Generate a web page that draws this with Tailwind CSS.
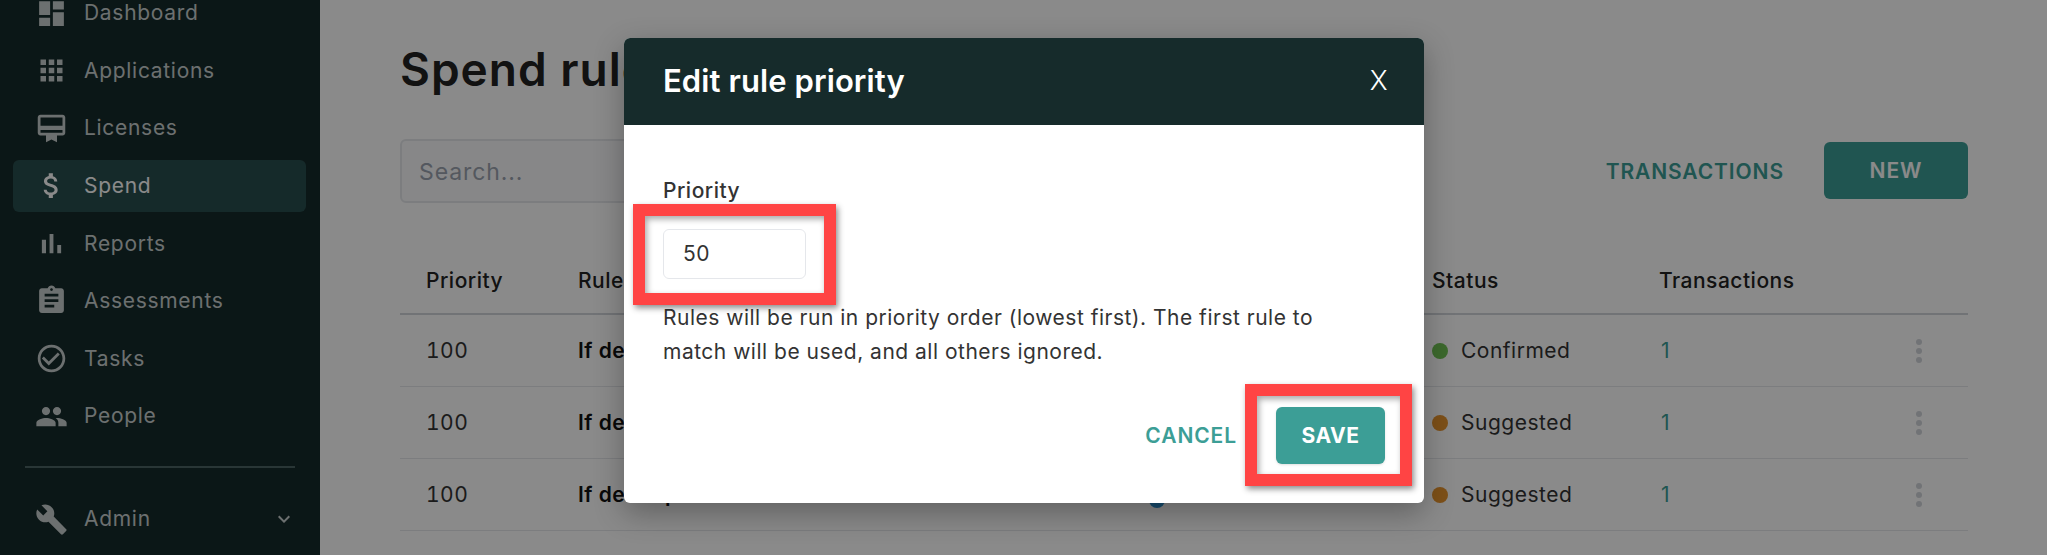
<!DOCTYPE html>
<html>
<head>
<meta charset="utf-8">
<title>Spend rules</title>
<script src="https://cdn.jsdelivr.net/npm/@tailwindcss/browser@4"></script>
</head>
<body class="relative h-[555px] overflow-hidden bg-white font-['Inter',sans-serif] text-[21px] tracking-[0.5px] text-[#333]">

  <div class="flex h-[555px]">
    <!-- Sidebar -->
    <aside class="w-[320px] shrink-0 h-[555px] overflow-hidden bg-[#162b2b] text-[#c8cfcf] tracking-[0.7px]">
      <nav class="-mt-[13px] px-[13px] flex flex-col gap-[5.6px]">
        <a class="h-[52px] w-[293px] flex items-center rounded-md pl-[22px]">
          <svg class="w-[33px] h-[33px] mr-[16px] fill-current" viewBox="0 0 24 24"><path d="M3 13h8V3H3v10zm0 8h8v-6H3v6zm10 0h8V11h-8v10zm0-18v6h8V3h-8z"/></svg>
          Dashboard
        </a>
        <a class="h-[52px] w-[293px] flex items-center rounded-md pl-[22px]">
          <svg class="w-[33px] h-[33px] mr-[16px] fill-current" viewBox="0 0 24 24"><path d="M4 8h4V4H4v4zm6 12h4v-4h-4v4zm-6 0h4v-4H4v4zm0-6h4v-4H4v4zm6 0h4v-4h-4v4zm6-10v4h4V4h-4zm-6 4h4V4h-4v4zm6 6h4v-4h-4v4zm0 6h4v-4h-4v4z"/></svg>
          Applications
        </a>
        <a class="h-[52px] w-[293px] flex items-center rounded-md pl-[22px]">
          <svg class="w-[33px] h-[33px] mr-[16px] fill-current" viewBox="0 0 24 24"><path d="M20 2H4c-1.11 0-2 .89-2 2v11c0 1.11.89 2 2 2h4v5l4-2 4 2v-5h4c1.11 0 2-.89 2-2V4c0-1.11-.89-2-2-2zm0 13H4v-2h16v2zm0-5H4V4h16v6z"/></svg>
          Licenses
        </a>
        <a class="h-[52px] w-[293px] flex items-center rounded-md pl-[22px] bg-[#284e4e] text-white">
          <svg class="w-[33px] h-[33px] mr-[16px] fill-current" viewBox="0 0 24 24"><path d="M11.8 10.9c-2.27-.59-3-1.2-3-2.15 0-1.09 1.01-1.85 2.7-1.85 1.78 0 2.44.85 2.5 2.1h2.21c-.07-1.72-1.12-3.3-3.21-3.81V3h-3v2.16c-1.94.42-3.5 1.68-3.5 3.61 0 2.31 1.91 3.46 4.7 4.13 2.5.6 3 1.48 3 2.41 0 .69-.49 1.79-2.7 1.79-2.06 0-2.87-.92-2.98-2.1h-2.2c.12 2.19 1.76 3.42 3.68 3.83V21h3v-2.15c1.95-.37 3.5-1.5 3.5-3.55 0-2.84-2.43-3.81-4.7-4.4z"/></svg>
          Spend
        </a>
        <a class="h-[52px] w-[293px] flex items-center rounded-md pl-[22px]">
          <svg class="w-[33px] h-[33px] mr-[16px] fill-current" viewBox="0 0 24 24"><path d="M5 9.2h3V19H5zM10.6 5h2.8v14h-2.8zm5.6 8H19v6h-2.8z"/></svg>
          Reports
        </a>
        <a class="h-[52px] w-[293px] flex items-center rounded-md pl-[22px]">
          <svg class="w-[33px] h-[33px] mr-[16px] fill-current" viewBox="0 0 24 24"><path d="M19 3h-4.18C14.4 1.84 13.3 1 12 1c-1.3 0-2.4.84-2.82 2H5c-1.1 0-2 .9-2 2v14c0 1.1.9 2 2 2h14c1.1 0 2-.9 2-2V5c0-1.1-.9-2-2-2zm-7 0c.55 0 1 .45 1 1s-.45 1-1 1-1-.45-1-1 .45-1 1-1zm2 14H7v-2h7v2zm3-4H7v-2h10v2zm0-4H7V7h10v2z"/></svg>
          Assessments
        </a>
        <a class="h-[52px] w-[293px] flex items-center rounded-md pl-[22px]">
          <svg class="w-[33px] h-[33px] mr-[16px] fill-current" viewBox="0 0 24 24"><path d="M16.59 7.58L10 14.17l-3.59-3.58L5 12l5 5 8-8zM12 2C6.48 2 2 6.48 2 12s4.48 10 10 10 10-4.48 10-10S17.52 2 12 2zm0 18c-4.42 0-8-3.58-8-8s3.58-8 8-8 8 3.58 8 8-3.58 8-8 8z"/></svg>
          Tasks
        </a>
        <a class="h-[52px] w-[293px] flex items-center rounded-md pl-[22px]">
          <svg class="w-[33px] h-[33px] mr-[16px] fill-current" viewBox="0 0 24 24"><path d="M16 11c1.66 0 2.99-1.34 2.99-3S17.66 5 16 5c-1.66 0-3 1.34-3 3s1.34 3 3 3zm-8 0c1.66 0 2.99-1.34 2.99-3S9.66 5 8 5C6.34 5 5 6.34 5 8s1.34 3 3 3zm0 2c-2.33 0-7 1.17-7 3.5V19h14v-2.5c0-2.33-4.67-3.5-7-3.5zm8 0c-.29 0-.62.02-.97.05 1.16.84 1.97 1.97 1.97 3.45V19h6v-2.5c0-2.33-4.67-3.5-7-3.5z"/></svg>
          People
        </a>
      </nav>
      <div class="mx-[25px] mt-[24px] h-[2px] bg-[#4c6565]"></div>
      <a class="mt-[25px] mx-[13px] h-[52px] w-[293px] flex items-center rounded-md pl-[22px]">
        <svg class="w-[33px] h-[33px] mr-[16px] fill-current" viewBox="0 0 24 24"><path d="M22.7 19l-9.1-9.1c.9-2.3.4-5-1.5-6.9-2-2-5-2.4-7.4-1.3L9 6 6 9 1.6 4.7C.4 7.1.9 10.1 2.9 12.1c1.9 1.9 4.6 2.4 6.9 1.5l9.1 9.1c.4.4 1 .4 1.4 0l2.3-2.3c.5-.4.5-1.1.1-1.4z"/></svg>
        Admin
        <svg class="ml-auto mr-[10px] w-[24px] h-[24px] fill-current" viewBox="0 0 24 24"><path d="M16.59 8.59L12 13.17 7.41 8.59 6 10l6 6 6-6z"/></svg>
      </a>
    </aside>

    <!-- Main -->
    <main class="flex-1 pl-[80px] pr-[79px]">
      <h1 class="mt-[41px] h-[56px] font-semibold text-[46px] leading-[56px] tracking-[1px] text-[#222]">Spend rules</h1>
      <div class="mt-[42px] flex items-center">
        <div class="w-[700px] h-[64px] flex items-center rounded-md border-2 border-[#e5e7eb] bg-[#f9fafb] pl-[17px] pt-[2px] text-[23px] tracking-[0.9px] text-[#9ca3af]">Search...</div>
        <a class="ml-auto pt-[2px] font-semibold tracking-[0.9px] text-[#3c9e96] mr-[40px]">TRANSACTIONS</a>
        <a class="w-[144px] h-[57px] -mt-[2px] pt-[1px] flex items-center justify-center rounded-md bg-[#3c9e96] font-semibold tracking-[0.9px] text-white">NEW</a>
      </div>
      <div class="mt-[46px] grid grid-cols-[152px_854px_227px_1fr] border-b-2 border-[#d1d5db] h-[66px] items-center font-medium pl-[26px] text-[#222]">
        <span>Priority</span><span>Rule</span><span>Status</span><span>Transactions</span>
      </div>
      <div class="grid grid-cols-[152px_854px_229px_1fr] h-[72px] items-center border-b border-[#e5e7eb] pl-[26px]">
        <span class="tabular-nums">100</span><span class="font-semibold text-[#111]">If description contains</span>
        <span class="flex items-center"><i class="w-4 h-4 rounded-full bg-[#6fc253] mr-[13px]"></i>Confirmed</span>
        <span class="flex items-center justify-between pr-[46px] text-[#3c9e96]">1
          <span class="flex flex-col gap-[3px]"><i class="w-[6px] h-[6px] rounded-full bg-[#d1d5db]"></i><i class="w-[6px] h-[6px] rounded-full bg-[#d1d5db]"></i><i class="w-[6px] h-[6px] rounded-full bg-[#d1d5db]"></i></span>
        </span>
      </div>
      <div class="grid grid-cols-[152px_854px_229px_1fr] h-[72px] items-center border-b border-[#e5e7eb] pl-[26px]">
        <span class="tabular-nums">100</span><span class="font-semibold text-[#111]">If description contains</span>
        <span class="flex items-center"><i class="w-4 h-4 rounded-full bg-[#e7942e] mr-[13px]"></i>Suggested</span>
        <span class="flex items-center justify-between pr-[46px] text-[#3c9e96]">1
          <span class="flex flex-col gap-[3px]"><i class="w-[6px] h-[6px] rounded-full bg-[#d1d5db]"></i><i class="w-[6px] h-[6px] rounded-full bg-[#d1d5db]"></i><i class="w-[6px] h-[6px] rounded-full bg-[#d1d5db]"></i></span>
        </span>
      </div>
      <div class="grid grid-cols-[152px_854px_229px_1fr] h-[72px] items-center border-b border-[#e5e7eb] pl-[26px]">
        <span class="tabular-nums">100</span>
        <span class="flex items-center">
          <span class="w-[571px] font-semibold text-[#111]">If description contains</span>
          <i class="w-4 h-4 mt-[10px] rounded-full bg-[#2b8fd0]"></i>
        </span>
        <span class="flex items-center"><i class="w-4 h-4 rounded-full bg-[#e7942e] mr-[13px]"></i>Suggested</span>
        <span class="flex items-center justify-between pr-[46px] text-[#3c9e96]">1
          <span class="flex flex-col gap-[3px]"><i class="w-[6px] h-[6px] rounded-full bg-[#d1d5db]"></i><i class="w-[6px] h-[6px] rounded-full bg-[#d1d5db]"></i><i class="w-[6px] h-[6px] rounded-full bg-[#d1d5db]"></i></span>
        </span>
      </div>
    </main>
  </div>

  <!-- Dimmed overlay -->
  <div class="absolute inset-0 bg-black/[0.46]"></div>

  <!-- Modal -->
  <div class="absolute left-[624px] top-[38px] w-[800px] h-[465px] rounded-md bg-white shadow-[0_10px_30px_rgba(0,0,0,0.3)] overflow-hidden">
    <div class="h-[87px] bg-[#162b2b] flex items-center justify-between pl-[39px] pr-[36px] text-white">
      <span class="font-semibold text-[31px] tracking-[0.1px]">Edit rule priority</span>
      <span class="text-[27px] font-light">X</span>
    </div>
    <div class="pl-[39px] pr-[39px]">
      <div class="mt-[51px] font-medium leading-[30px]">Priority</div>
      <div class="mt-[23px] w-[143px] h-[50px] rounded-md border border-[#e5e7eb] flex items-center pl-[19px]">50</div>
      <p class="mt-[22px] leading-[34px] w-[690px]">Rules will be run in priority order (lowest first). The first rule to match will be used, and all others ignored.</p>
      <div class="mt-[38px] flex items-center justify-end">
        <a class="font-semibold tracking-[0.9px] text-[#3c9e96] mr-[39px]">CANCEL</a>
        <a class="w-[109px] h-[57px] flex items-center justify-center rounded-md bg-[#3c9e96] font-bold text-white shadow-sm">SAVE</a>
      </div>
    </div>
  </div>

  <!-- Red annotation boxes -->
  <div class="absolute left-[633px] top-[204px] w-[203px] h-[101px] border-[12px] border-[#ff4444] shadow-[2px_3px_6px_rgba(0,0,0,0.45),inset_2px_3px_6px_rgba(0,0,0,0.35)]"></div>
  <div class="absolute left-[1245px] top-[384px] w-[167px] h-[102px] border-[12px] border-[#ff4444] shadow-[2px_3px_6px_rgba(0,0,0,0.45),inset_2px_3px_6px_rgba(0,0,0,0.35)]"></div>
</body>
</html>
